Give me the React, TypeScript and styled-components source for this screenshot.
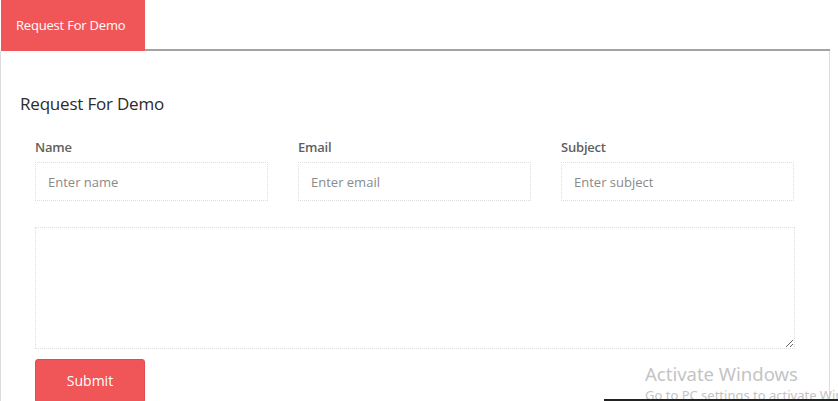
import React from "react";
import styled, { createGlobalStyle } from "styled-components";

const Global = createGlobalStyle`
  html, body { margin: 0; padding: 0; background: #fff; }
  body { font-family: "Open Sans", "Noto Sans", sans-serif; overflow: hidden; }
  * { box-sizing: border-box; }
`;

const Page = styled.div`
  width: 838px;
  height: 401px;
  position: relative;
  overflow: hidden;
`;

const Frame = styled.div`
  width: 830px;
  display: flex;
  flex-direction: column;
`;

const TabBar = styled.div`
  display: flex;
  height: 51px;
  padding-left: 1px;
`;

const Tab = styled.div`
  width: 144px;
  height: 51px;
  background: #f05558;
  color: #fff;
  font-size: 13px;
  display: flex;
  align-items: center;
  padding-left: 15px;
  padding-bottom: 2px;
  letter-spacing: -0.2px;
`;

const TabFill = styled.div`
  flex: 1;
  border-bottom: 2px solid #a3a3a3;
`;

const Panel = styled.div`
  border-left: 1px solid #dcdcdc;
  border-right: 1px solid #dcdcdc;
  padding: 43px 34px 0 19px;
  height: 350px;
`;

const Heading = styled.h2`
  margin: 0;
  font-weight: 400;
  font-size: 17px;
  line-height: 20px;
  color: #2b2b2b;
  letter-spacing: -0.2px;
`;

const Form = styled.form`
  padding-left: 15px;
  margin-top: 25px;
  display: flex;
  flex-direction: column;
`;

const Row = styled.div`
  display: grid;
  grid-template-columns: repeat(3, 233px);
  column-gap: 30px;
`;

const Field = styled.div`
  display: flex;
  flex-direction: column;
`;

const Label = styled.label`
  font-size: 13px;
  line-height: 16px;
  font-weight: 600;
  color: #5f5f5f;
  margin-bottom: 7px;
  letter-spacing: -0.2px;
`;

const Input = styled.input`
  height: 39px;
  border: 1px dotted #dedede;
  padding: 0 12px;
  font-family: inherit;
  font-size: 13px;
  color: #555;
  outline: none;
  &::placeholder { color: #8a8a8a; }
`;

const TextArea = styled.textarea`
  margin-top: 26px;
  width: 760px;
  height: 122px;
  border: 1px dotted #dedede;
  font-family: inherit;
  resize: vertical;
  outline: none;
`;

const Submit = styled.button`
  margin-top: 10px;
  width: 110px;
  height: 44px;
  background: #f05558;
  color: #fff;
  border: 1px solid #e24a4e;
  border-radius: 3px;
  font-family: inherit;
  font-size: 14px;
  padding: 0 0 2px;
`;

const Watermark = styled.div`
  position: absolute;
  left: 645px;
  top: 361px;
  color: #c4c4c4;
  font-family: "Noto Sans", "Open Sans", sans-serif;
  white-space: nowrap;
`;

const WmTitle = styled.div`
  font-size: 18.5px;
  line-height: 26px;
`;

const WmSub = styled.div`
  font-size: 13px;
  line-height: 16px;
`;

const TaskLine = styled.div`
  position: absolute;
  left: 604px;
  right: 0;
  bottom: 0;
  height: 2px;
  background: #222;
`;

export default function App() {
  return (
    <Page>
      <Global />
      <Frame>
        <TabBar>
          <Tab>Request For Demo</Tab>
          <TabFill />
        </TabBar>
        <Panel>
          <Heading>Request For Demo</Heading>
          <Form onSubmit={(e) => e.preventDefault()}>
            <Row>
              <Field>
                <Label>Name</Label>
                <Input placeholder="Enter name" />
              </Field>
              <Field>
                <Label>Email</Label>
                <Input placeholder="Enter email" />
              </Field>
              <Field>
                <Label>Subject</Label>
                <Input placeholder="Enter subject" />
              </Field>
            </Row>
            <TextArea />
            <div>
              <Submit type="submit">Submit</Submit>
            </div>
          </Form>
        </Panel>
      </Frame>
      <Watermark>
        <WmTitle>Activate Windows</WmTitle>
        <WmSub>Go to PC settings to activate Windows.</WmSub>
      </Watermark>
      <TaskLine />
    </Page>
  );
}
